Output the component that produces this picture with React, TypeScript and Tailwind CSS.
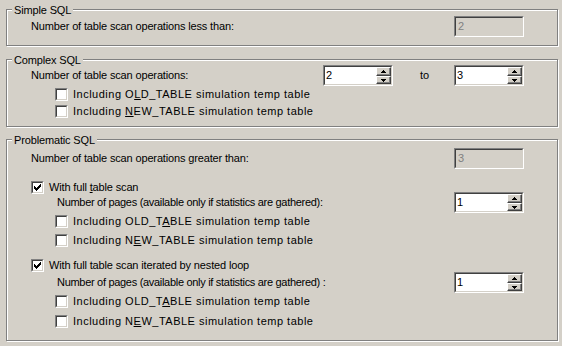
import React from 'react'

// Classic Windows property page: scan-operation thresholds for SQL classes.

const FACE = 'bg-[#d4d0c8]'

function GroupBox({ title, className = '', children }: { title: string; className?: string; children: React.ReactNode }) {
  return (
    <div
      className={`relative ml-[6px] box-border w-[552px] border border-[#808080] shadow-[inset_1px_1px_0_#fff,1px_1px_0_#fff] ${className}`}
    >
      <span className={`absolute -top-[6px] left-[5px] px-[2px] leading-[13px] ${FACE}`}>{title}</span>
      {children}
    </div>
  )
}

function CheckBox({ checked = false }: { checked?: boolean }) {
  return (
    <span className="box-border flex h-[13px] w-[13px] shrink-0 border border-t-[#808080] border-l-[#808080] border-b-white border-r-white">
      <span className="flex flex-1 items-center justify-center border border-t-[#404040] border-l-[#404040] border-b-[#d4d0c8] border-r-[#d4d0c8] bg-white">
        {checked && (
          <svg width="7" height="7" viewBox="0 0 7 7" shapeRendering="crispEdges">
            <path
              fill="#000"
              d="M0 2h1v3H0z M1 3h1v3H1z M2 4h1v3H2z M3 3h1v3H3z M4 2h1v3H4z M5 1h1v3H5z M6 0h1v3H6z"
            />
          </svg>
        )}
      </span>
    </span>
  )
}

function SunkenBox({ disabled = false, children }: { disabled?: boolean; children: React.ReactNode }) {
  return (
    <div className="box-border flex h-[21px] w-[70px] shrink-0 border border-t-[#808080] border-l-[#808080] border-b-white border-r-white">
      <div
        className={`flex flex-1 border border-t-[#404040] border-l-[#404040] border-b-[#d4d0c8] border-r-[#d4d0c8]
          ${disabled ? 'bg-[#d4d0c8] text-[#808080]' : 'bg-white text-black'}`}
      >
        {children}
      </div>
    </div>
  )
}

function SpinButton({ up = false, className = '' }: { up?: boolean; className?: string }) {
  return (
    <span
      className={`box-border flex items-center justify-center border border-t-white border-l-white border-b-[#404040] border-r-[#404040] bg-[#d4d0c8] shadow-[inset_-1px_-1px_0_#808080] ${className}`}
    >
      <svg width="5" height="3" viewBox="0 0 5 3" shapeRendering="crispEdges">
        <path fill="#000" d={up ? 'M2 0h1v1H2z M1 1h3v1H1z M0 2h5v1H0z' : 'M0 0h5v1H0z M1 1h3v1H1z M2 2h1v1H2z'} />
      </svg>
    </span>
  )
}

function SpinBox({ value }: { value: string }) {
  return (
    <SunkenBox>
      <span className="flex-1 pl-[1px] leading-[17px]">{value}</span>
      <span className="flex w-[15px] flex-col">
        <SpinButton up className="h-[9px]" />
        <SpinButton className="flex-1" />
      </span>
    </SunkenBox>
  )
}

function DisabledBox({ value }: { value: string }) {
  return (
    <SunkenBox disabled>
      <span className="flex-1 pl-[2px] leading-[17px]">{value}</span>
    </SunkenBox>
  )
}

function CheckRow({ checked, className = '', children }: { checked?: boolean; className?: string; children: React.ReactNode }) {
  return (
    <label className={`flex h-[13px] items-center gap-[5px] ${className}`}>
      <CheckBox checked={checked} />
      <span className="leading-[13px]">{children}</span>
    </label>
  )
}

function TempTableRows({ oldKey, newKey, firstMt, secondMt }: { oldKey: 'L' | 'A'; newKey: 'N' | 'E'; firstMt: string; secondMt: string }) {
  return (
    <>
      <CheckRow className={`ml-[48px] tracking-[0.5px] ${firstMt}`}>
        Including{' '}
        {oldKey === 'L' ? (
          <>O<u>L</u>D_TABLE</>
        ) : (
          <>OLD_T<u>A</u>BLE</>
        )}{' '}
        simulation temp table
      </CheckRow>
      <CheckRow className={`ml-[48px] tracking-[0.5px] ${secondMt}`}>
        Including{' '}
        {newKey === 'N' ? (
          <><u>N</u>EW_TABLE</>
        ) : (
          <>N<u>E</u>W_TABLE</>
        )}{' '}
        simulation temp table
      </CheckRow>
    </>
  )
}

export default function App() {
  return (
    <div className={`h-[346px] w-[562px] overflow-hidden pt-[9px] font-['Liberation_Sans',Arial,sans-serif] text-[11px] tracking-[-0.15px] text-black ${FACE}`}>
      <GroupBox title="Simple SQL" className="h-[37px]">
        <div className="mt-[6px] flex h-[21px] items-center pl-[24px] pr-[33px]">
          <span className="flex-1">Number of table scan operations less than:</span>
          <DisabledBox value="2" />
        </div>
      </GroupBox>

      <GroupBox title="Complex SQL" className="mt-[13px] h-[68px]">
        <div className="mt-[5px] flex h-[21px] items-center pl-[24px] pr-[33px]">
          <span className="flex-1">Number of table scan operations:</span>
          <SpinBox value="2" />
          <span className="w-[61px] pl-[27px]">to</span>
          <SpinBox value="3" />
        </div>
        <TempTableRows oldKey="L" newKey="N" firstMt="mt-[2px]" secondMt="mt-[4px]" />
      </GroupBox>

      <GroupBox title="Problematic SQL" className="mt-[12px] h-[202px]">
        <div className="mt-[8px] flex h-[21px] items-center pl-[24px] pr-[33px]">
          <span className="flex-1">Number of table scan operations greater than:</span>
          <DisabledBox value="3" />
        </div>

        <CheckRow checked className="mt-[12px] ml-[24px]">
          With full <u>t</u>able scan
        </CheckRow>
        <div className="mt-[2px] flex h-[13px] items-center pl-[50px] pr-[33px]">
          <span className="flex-1 leading-[13px] tracking-[-0.3px]">Number of pages (available only if statistics are gathered):</span>
          <SpinBox value="1" />
        </div>
        <TempTableRows oldKey="A" newKey="E" firstMt="mt-[6px]" secondMt="mt-[6px]" />

        <CheckRow checked className="mt-[12px] ml-[24px]">
          With full table scan iterated by nested loop
        </CheckRow>
        <div className="mt-[4px] flex h-[13px] items-center pl-[50px] pr-[33px]">
          <span className="flex-1 leading-[13px] tracking-[-0.3px]">Number of pages (available only if statistics are gathered) :</span>
          <SpinBox value="1" />
        </div>
        <TempTableRows oldKey="A" newKey="E" firstMt="mt-[6px]" secondMt="mt-[7px]" />
      </GroupBox>
    </div>
  )
}
